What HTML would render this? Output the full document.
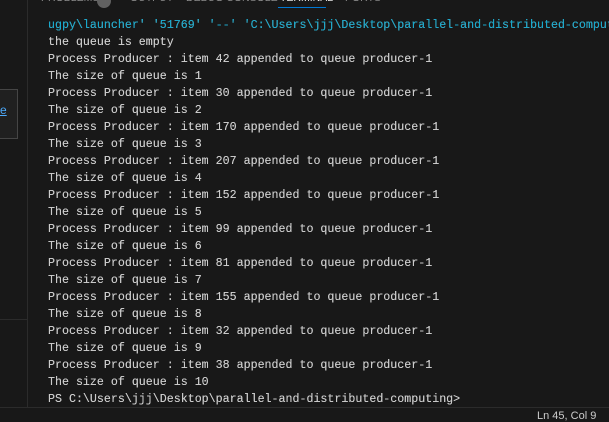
<!DOCTYPE html>
<html><head><meta charset="utf-8"><style>
html,body{margin:0;padding:0;width:609px;height:422px;overflow:hidden;background:#181818;}
body{position:relative;font-family:"Liberation Mono",monospace;}
.side{position:absolute;left:0;top:0;width:27px;height:407px;background:#181818;border-right:1px solid #2b2b2b;}
.hl{position:absolute;left:0;top:319px;width:27px;height:1px;background:#2b2b2b;}
.box{position:absolute;left:-2px;top:89px;width:18px;height:48px;border:1px solid #454545;background:#202020;}
.box span{position:absolute;left:1px;top:13px;color:#4daafc;font:12px "Liberation Sans",sans-serif;text-decoration:underline;}
.tabs{position:absolute;left:41px;top:-8px;font:10.5px "Liberation Sans",sans-serif;color:#8b8b8b;white-space:nowrap;height:20px;width:560px}
.tabs span{position:absolute;top:0}
.badge{position:absolute;left:97px;top:-6px;width:14px;height:14px;border-radius:7px;background:#616161}
.under{position:absolute;left:278px;top:7px;width:48px;height:1px;background:#0078d4}
.term{position:absolute;left:48px;top:17px;font-size:11.65px;line-height:17px;color:#cccccc;white-space:pre;text-shadow:0 0 0.3px #ccc}
.blue{color:#11a8cd}
.status{position:absolute;left:0;top:407px;width:609px;height:15px;background:#181818;border-top:1px solid #2b2b2b;}
.status span{position:absolute;left:537px;top:2px;font:11px "Liberation Sans",sans-serif;color:#cccccc;}
</style></head><body>
<div class="side"></div><div class="hl"></div>
<div class="box"><span>e</span></div>
<div class="tabs"><span style="left:0">PROBLEMS</span><span style="left:89px">OUTPUT</span><span style="left:145px">DEBUG CONSOLE</span><span style="left:239px;color:#e7e7e7">TERMINAL</span><span style="left:304px">PORTS</span></div>
<div class="badge"></div><div class="under"></div>
<div class="term"><span class="blue">ugpy\launcher' '51769' '--' 'C:\Users\jjj\Desktop\parallel-and-distributed-computing</span>
the queue is empty
Process Producer : item 42 appended to queue producer-1
The size of queue is 1
Process Producer : item 30 appended to queue producer-1
The size of queue is 2
Process Producer : item 170 appended to queue producer-1
The size of queue is 3
Process Producer : item 207 appended to queue producer-1
The size of queue is 4
Process Producer : item 152 appended to queue producer-1
The size of queue is 5
Process Producer : item 99 appended to queue producer-1
The size of queue is 6
Process Producer : item 81 appended to queue producer-1
The size of queue is 7
Process Producer : item 155 appended to queue producer-1
The size of queue is 8
Process Producer : item 32 appended to queue producer-1
The size of queue is 9
Process Producer : item 38 appended to queue producer-1
The size of queue is 10
PS C:\Users\jjj\Desktop\parallel-and-distributed-computing&gt;</div>
<div class="status"><span>Ln 45, Col 9</span></div>
</body></html>
